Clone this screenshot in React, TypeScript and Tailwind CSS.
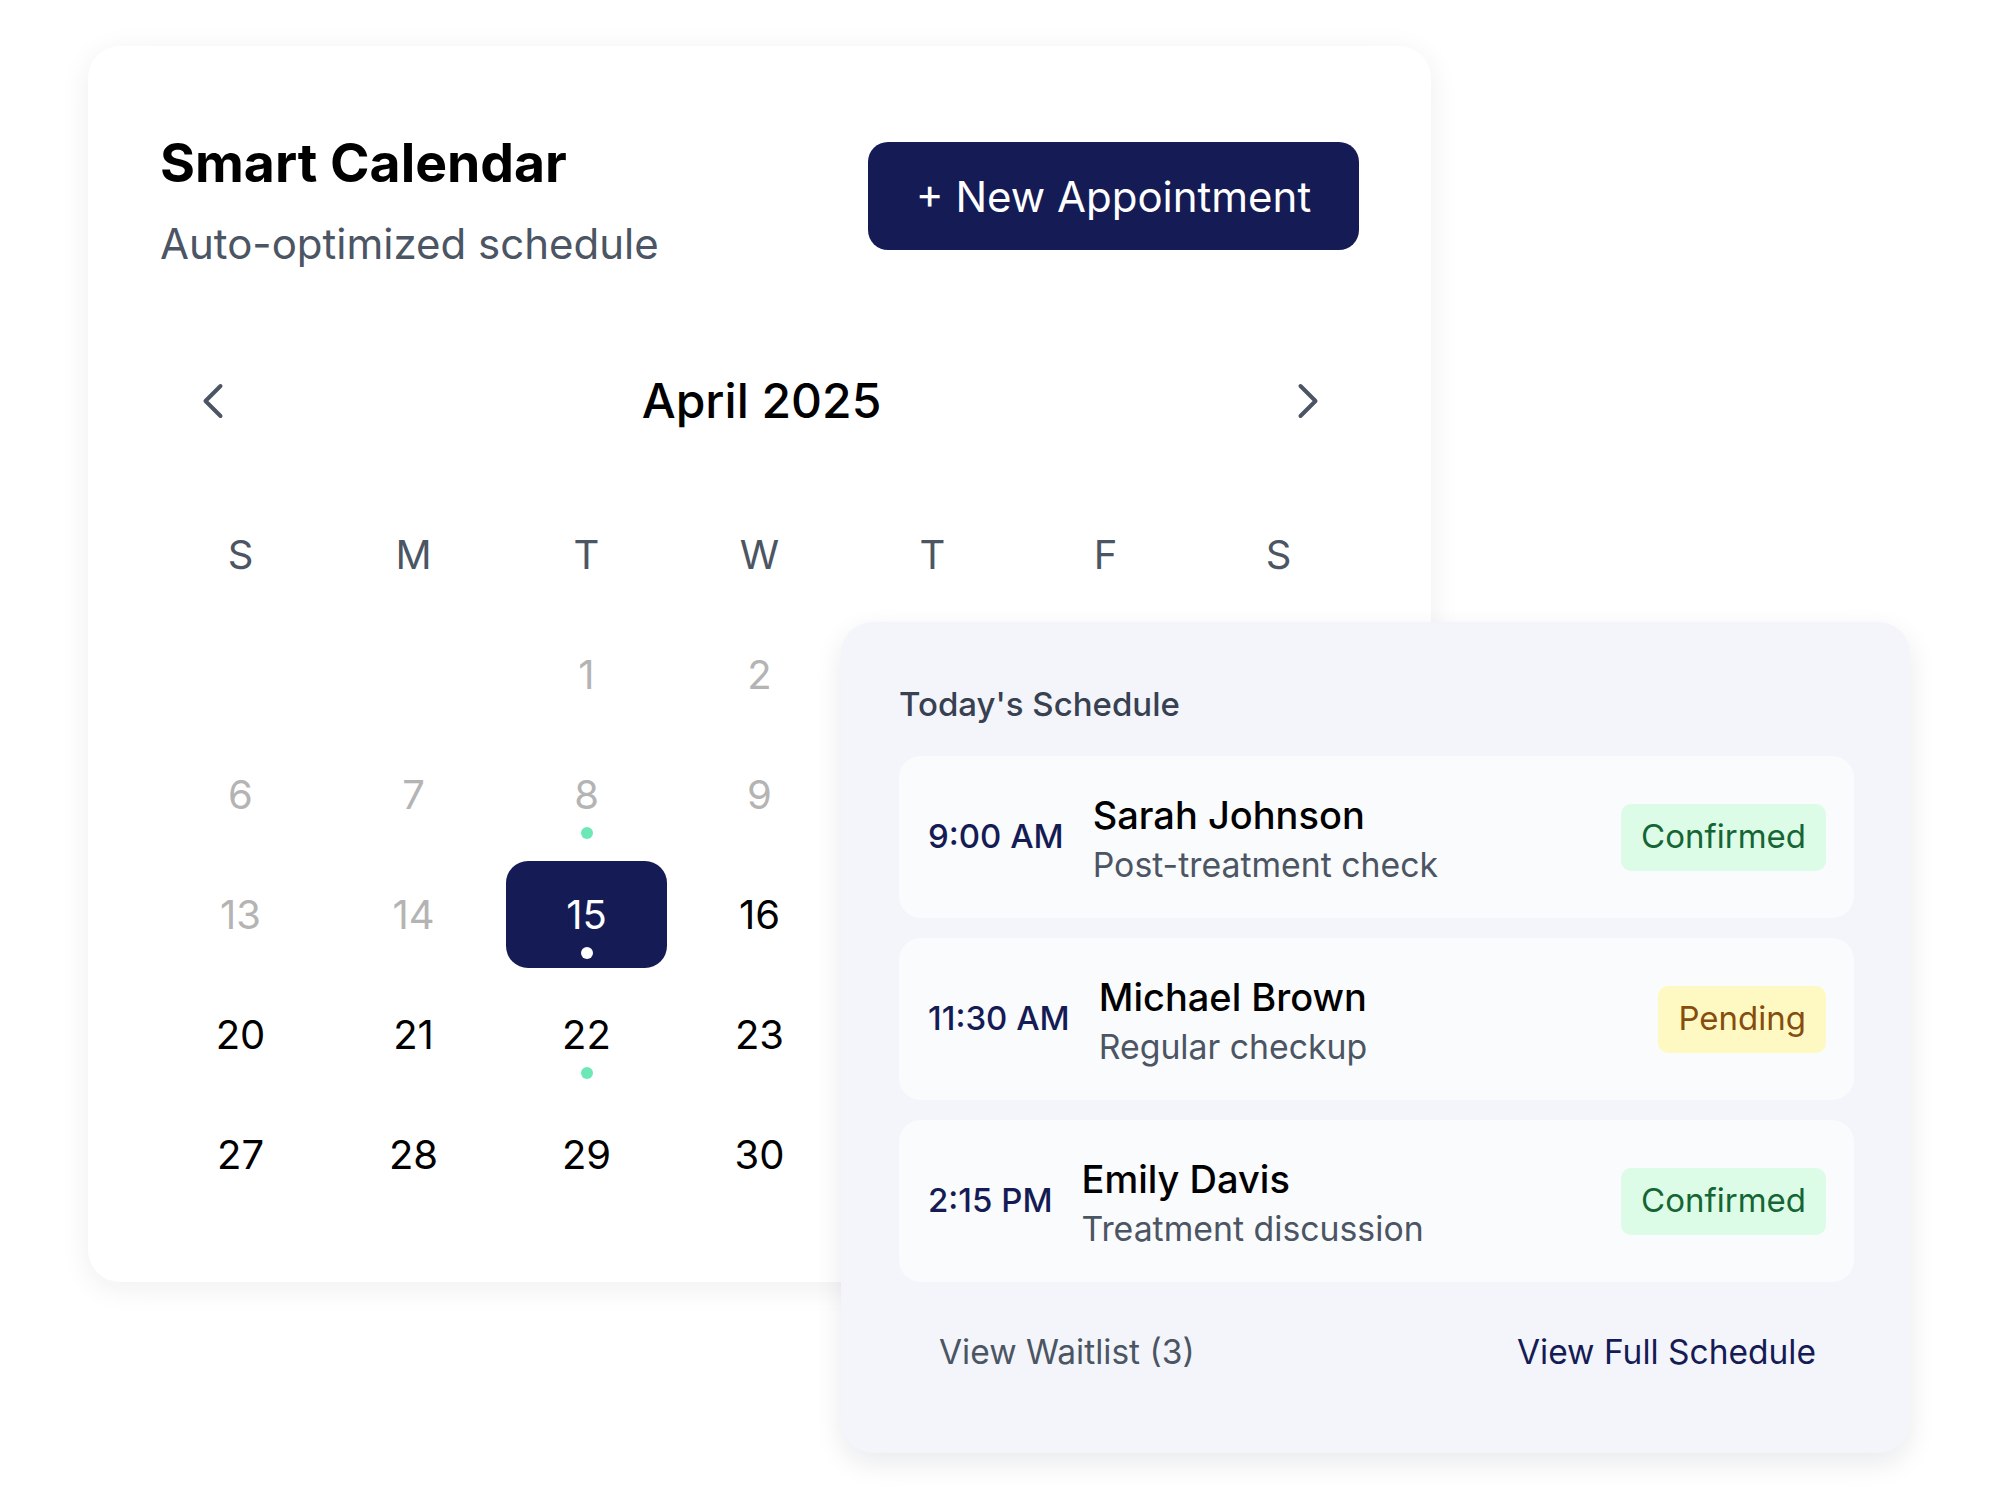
import { ChevronLeft, ChevronRight } from "lucide-react";

const heads = ["S", "M", "T", "W", "T", "F", "S"];

type Appt = {
  time: string;
  name: string;
  desc: string;
  status: "Confirmed" | "Pending";
};

const appts: Appt[] = [
  { time: "9:00 AM", name: "Sarah Johnson", desc: "Post-treatment check", status: "Confirmed" },
  { time: "11:30 AM", name: "Michael Brown", desc: "Regular checkup", status: "Pending" },
  { time: "2:15 PM", name: "Emily Davis", desc: "Treatment discussion", status: "Confirmed" },
];

function DayCell({ d, dot }: { d: number | null; dot: boolean }) {
  if (d === null) return <div />;
  const today = d === 15;
  const past = d < 15;
  return (
    <div
      className={
        today
          ? "relative flex items-center justify-center rounded-[22px] bg-[#151c55] text-[40px] text-white"
          : past
          ? "relative flex items-center justify-center text-[40px] text-[#b4b4b4]"
          : "relative flex items-center justify-center text-[40px] text-black"
      }
    >
      <span>{d}</span>
      {dot && (
        <span
          className={
            today
              ? "absolute bottom-[9px] left-1/2 h-3 w-3 -translate-x-1/2 rounded-full bg-white"
              : "absolute bottom-[9px] left-1/2 h-3 w-3 -translate-x-1/2 rounded-full bg-[#6ee7b7]"
          }
        />
      )}
    </div>
  );
}

export default function App() {
  const cells: (number | null)[] = [null, null, ...Array.from({ length: 30 }, (_, i) => i + 1)];
  const dots = new Set([8, 15, 22]);
  return (
    <div className="min-h-screen w-full bg-white pl-[88px] pt-[46px] font-['Inter',sans-serif]">
      <div className="relative w-[1343px]">
        {/* Calendar card */}
        <div className="w-full rounded-[32px] bg-white px-[72px] pt-[72px] pb-[74px] shadow-[0_6px_30px_rgba(15,23,42,0.07)]">
          <div className="flex items-start justify-between">
            <div className="pt-[14px]">
              <h1 className="text-[53.5px] font-bold leading-[62px] text-black">Smart Calendar</h1>
              <p className="mt-[21px] text-[42px] leading-[58px] text-[#4b5563]">Auto-optimized schedule</p>
            </div>
            <button className="mt-[24px] flex h-[108px] w-[491px] items-center justify-center rounded-[20px] bg-[#151c55] text-[42px] text-white">
              + New Appointment
            </button>
          </div>

          <div className="mt-[75px] flex h-[106px] items-center justify-between">
            <button className="flex h-[106px] w-[106px] items-center justify-center text-[#4b5563]">
              <ChevronLeft size={60} strokeWidth={1.6} />
            </button>
            <div className="text-[48px] font-medium text-black">April 2025</div>
            <button className="flex h-[106px] w-[102px] items-center justify-center text-[#4b5563]">
              <ChevronRight size={60} strokeWidth={1.6} />
            </button>
          </div>

          <div className="mt-[47px] grid auto-rows-[107px] grid-cols-7 gap-x-3 gap-y-[13px]">
            {heads.map((h, i) => (
              <div key={"h" + i} className="flex items-center justify-center text-[40px] text-[#4b5563]">
                {h}
              </div>
            ))}
            {cells.map((d, i) => (
              <DayCell key={i} d={d} dot={d !== null && dots.has(d)} />
            ))}
          </div>
        </div>

        {/* Today's schedule card */}
        <div className="absolute left-[753px] top-[576px] h-[831px] w-[1069px] rounded-[32px] bg-[#f4f5fa] pl-[58px] pr-[56px] pt-[58px] shadow-[0_10px_28px_rgba(15,23,42,0.09)]">
          <h2 className="text-[33px] font-medium leading-[48px] text-[#374151]">Today's Schedule</h2>
          <div className="mt-[28px] flex flex-col gap-[20px]">
            {appts.map((a) => (
              <div
                key={a.name}
                className="flex h-[162px] items-center justify-between rounded-[22px] bg-[#fafbfd] pl-[29px] pr-[28px]"
              >
                <div className="flex items-center gap-[29px]">
                  <div className="text-[33px] font-medium text-[#151c55]">{a.time}</div>
                  <div className="flex flex-col pt-[4px]">
                    <div className="text-[38px] font-medium leading-[52px] text-black">{a.name}</div>
                    <div className="text-[33.8px] leading-[48px] text-[#4b5563]">{a.desc}</div>
                  </div>
                </div>
                <div
                  className={
                    a.status === "Confirmed"
                      ? "flex h-[67px] items-center rounded-[10px] bg-[#dcfce7] px-[20px] text-[33px] text-[#166534]"
                      : "flex h-[67px] items-center rounded-[10px] bg-[#fef9c3] px-[20px] text-[33px] text-[#854d0e]"
                  }
                >
                  {a.status}
                </div>
              </div>
            ))}
          </div>
          <div className="mt-[45px] flex items-center justify-between pl-[40px] pr-[38px]">
            <button className="text-[33.5px] leading-[50px] text-[#4b5563]">View Waitlist (3)</button>
            <button className="text-[33.5px] leading-[50px] text-[#151c55]">View Full Schedule</button>
          </div>
        </div>
      </div>
    </div>
  );
}
